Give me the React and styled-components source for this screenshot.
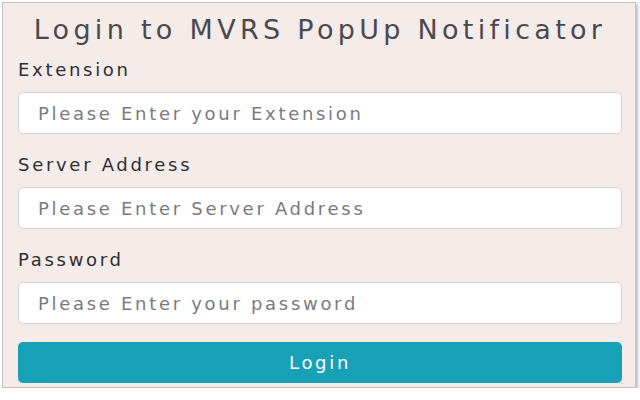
import React from "react";
import styled, { createGlobalStyle } from "styled-components";

const GlobalStyle = createGlobalStyle`
  body {
    margin: 0;
    background: #fff;
    font-family: "DejaVu Sans", "Liberation Sans", sans-serif;
  }
`;

const Panel = styled.div`
  box-sizing: border-box;
  width: 634px;
  margin: 2px 0 0 2px;
  padding: 10px 13px 4px 15px;
  background: #f5ecea;
  border: 1px solid #c4c0bf;
  box-shadow: 2px 2px 3px rgba(0, 0, 0, 0.25);
`;

const Title = styled.h1`
  margin: 0 0 12px;
  font-size: 27px;
  line-height: 34px;
  font-weight: 400;
  letter-spacing: 4.3px;
  color: #4a4a4e;
  text-align: center;
`;

const Form = styled.form`
  display: flex;
  flex-direction: column;
  gap: 20px;
`;

const Field = styled.div`
  display: flex;
  flex-direction: column;
`;

const Label = styled.label`
  margin: 0 0 11px;
  font-size: 18px;
  line-height: 22px;
  letter-spacing: 2.7px;
  color: #2f2f33;
`;

const Input = styled.input`
  box-sizing: border-box;
  width: 100%;
  height: 42px;
  margin: 0;
  padding: 0 19px;
  border: 1px solid #cfd4da;
  border-radius: 5px;
  background: #fff;
  font-family: inherit;
  font-size: 18px;
  letter-spacing: 2.7px;
  color: #333;
  &::placeholder {
    color: #7a7a7e;
  }
`;

const Button = styled.button`
  height: 41px;
  margin-top: -2px;
  border: none;
  border-radius: 5px;
  background: #16a1b6;
  color: #fff;
  font-family: inherit;
  font-size: 18px;
  letter-spacing: 2.7px;
`;

const fields = [
  { id: "ext", label: "Extension", placeholder: "Please Enter your Extension" },
  { id: "server", label: "Server Address", placeholder: "Please Enter Server Address" },
  { id: "pass", label: "Password", placeholder: "Please Enter your password", type: "password" },
];

export default function App() {
  return (
    <>
      <GlobalStyle />
      <Panel>
        <Title>Login to MVRS PopUp Notificator</Title>
        <Form onSubmit={(e) => e.preventDefault()}>
          {fields.map(({ id, label, placeholder, type }) => (
            <Field key={id}>
              <Label htmlFor={id}>{label}</Label>
              <Input id={id} type={type || "text"} placeholder={placeholder} />
            </Field>
          ))}
          <Button type="submit">Login</Button>
        </Form>
      </Panel>
    </>
  );
}
